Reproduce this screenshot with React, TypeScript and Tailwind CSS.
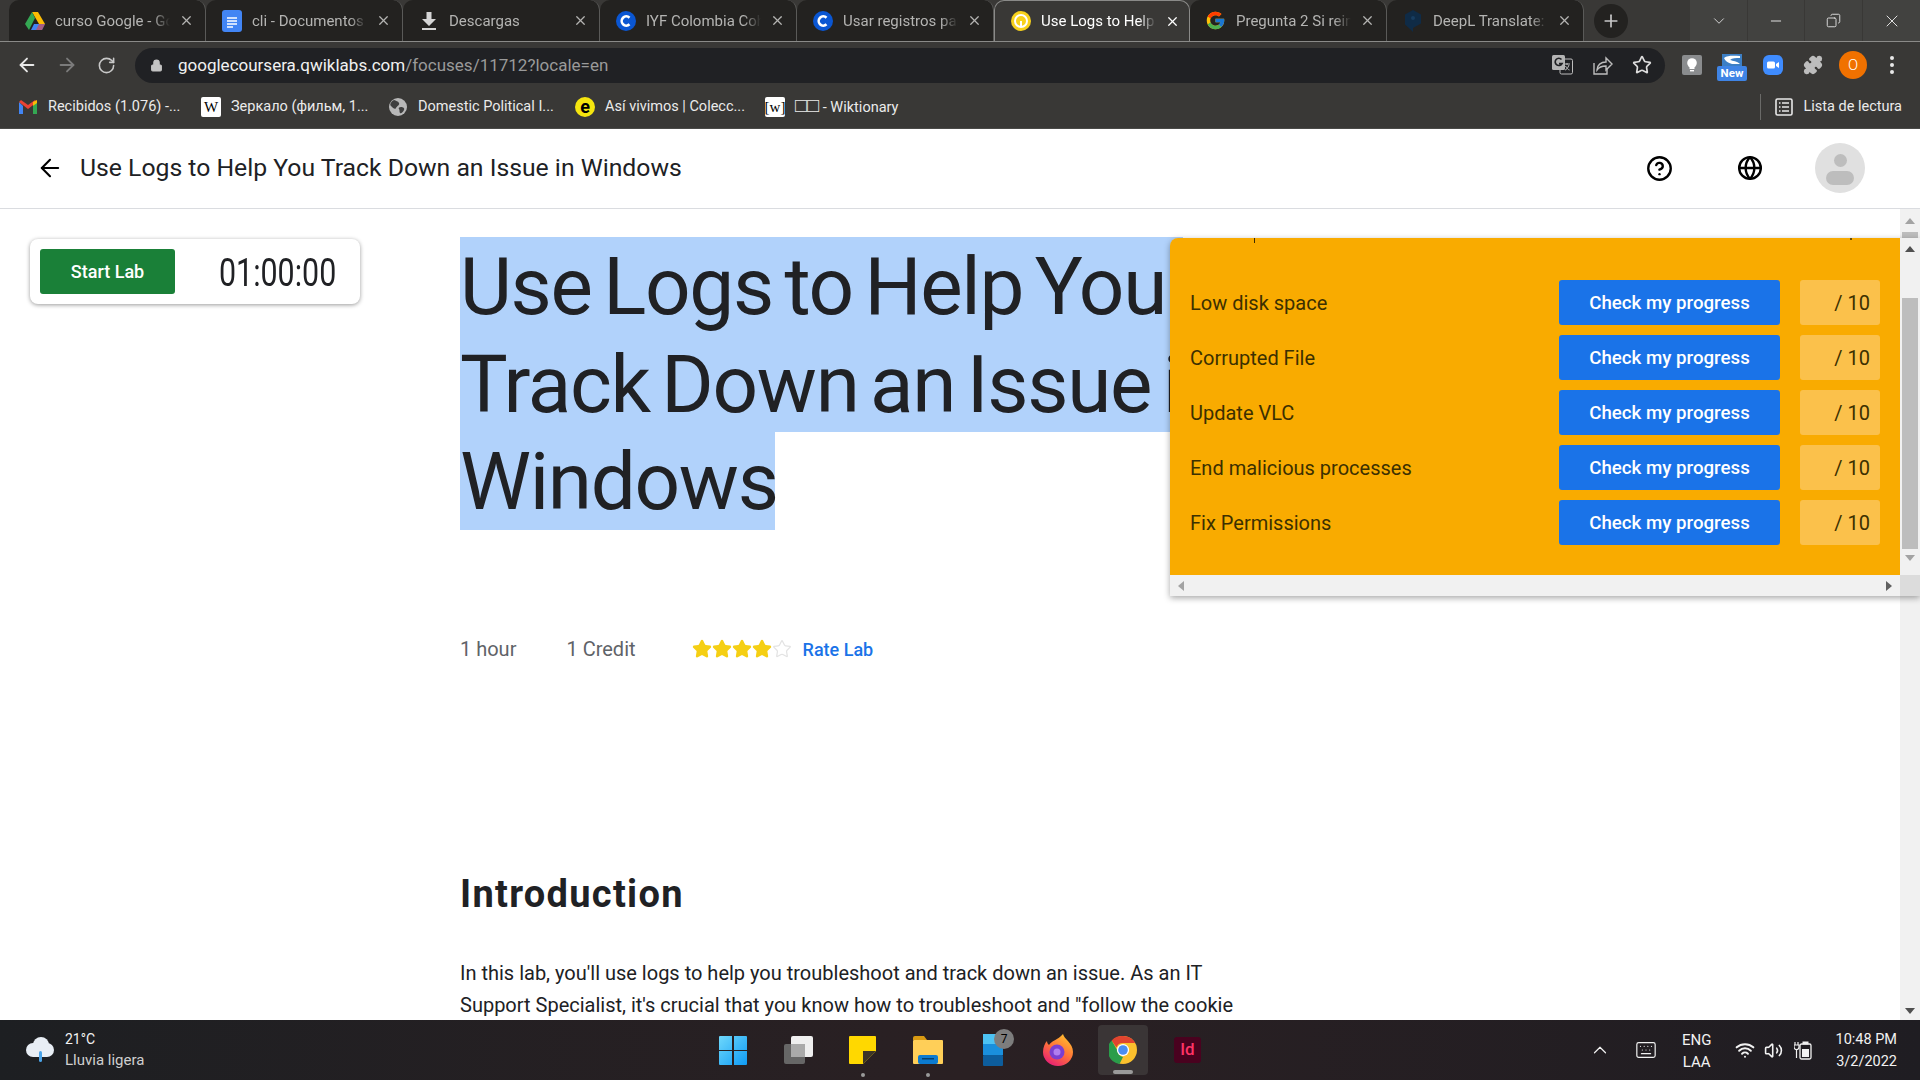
import React from 'react';
import {
  ArrowLeft,
  ArrowRight,
  RotateCw,
  Lock,
  Star,
  CircleHelp,
  Globe,
  ChevronDown,
  ChevronUp,
  Minus,
  X,
  Plus,
  Copy,
  Keyboard,
  Wifi,
  Volume2,
  Puzzle,
} from 'lucide-react';
import { FcGoogle } from 'react-icons/fc';

const DriveIcon = () => (
  <svg width="20" height="18" viewBox="0 0 20 18">
    <polygon points="7,0 13,0 20,12 14,12" fill="#fbbc04" />
    <polygon points="7,0 10,6 4,18 0,12" fill="#34a853" />
    <polygon points="6,18 9,12 20,12 17,18" fill="#4285f4" />
    <polygon points="14,12 20,12 17,18 11,18" fill="#ea4335" opacity="0.6" />
  </svg>
);

const DocsIcon = () => (
  <svg width="20" height="22" viewBox="0 0 20 22">
    <rect width="20" height="22" rx="3" fill="#4285f4" />
    <path d="M5 8h10M5 11h10M5 14h10M5 17h6" stroke="#fff" strokeWidth="1.6" />
  </svg>
);

const DownloadArrow = () => (
  <svg width="16" height="18" viewBox="0 0 16 18">
    <path d="M5.500 0h5v7H15l-7 7-7-7h4.500z" fill="#d5d5d5" />
    <rect x="1" y="16" width="14" height="2" fill="#d5d5d5" />
  </svg>
);

const CourseraIcon = () => (
  <svg width="20" height="20" viewBox="0 0 20 20">
    <circle cx="10" cy="10" r="10" fill="#0a56d2" />
    <path d="M13.500 6.700a4.600 4.600 0 1 0 0 6.600" fill="none" stroke="#fff" strokeWidth="2.600" />
  </svg>
);

const QwikIcon = () => (
  <svg width="20" height="20" viewBox="0 0 20 20">
    <circle cx="10" cy="10" r="10" fill="#f8d21c" />
    <circle cx="10" cy="10" r="6" fill="none" stroke="#fff" strokeWidth="2" />
    <path d="M10 10v6" stroke="#fff" strokeWidth="2" />
  </svg>
);

const DeeplIcon = () => (
  <svg width="18" height="22" viewBox="0 0 18 22">
    <path d="M9 0l8 4.500v9L9 18v4l-3-3-5-4.500V4.500z" fill="#0f2b46" />
    <circle cx="9" cy="8" r="2" fill="#173d60" />
  </svg>
);

const GmailIcon = () => (
  <svg width="18" height="14" viewBox="0 0 18 14">
    <path d="M0 2v12h4V6z" fill="#4285f4" />
    <path d="M18 2v12h-4V6z" fill="#34a853" />
    <path d="M0 2l9 7 9-7-2-2-7 5-7-5-2 2z" fill="#ea4335" />
    <path d="M14 2l4-2v3l-4 3z" fill="#fbbc04" />
  </svg>
);

const GlobeFav = () => (
  <svg width="18" height="18" viewBox="0 0 18 18">
    <circle cx="9" cy="9" r="9" fill="#b8b8b8" />
    <path d="M5 2c2 1 4 1 5 3s-2 3-3 5-3 0-5-2 1-5 3-6zM12 9c2 0 4 1 3 3s-3 4-4 3 0-3-1-4 0-2 2-2z" fill="#3f3f3f" />
  </svg>
);

const BookmarkW = ({ bracket }: { bracket?: boolean }) => (
  <span className="flex h-[20px] w-[20px] shrink-0 items-center justify-center rounded-[2px] bg-white font-['Liberation_Serif',serif] text-[15px] leading-none text-black">
    {bracket ? '[w]' : 'W'}
  </span>
);

const ReadingList = () => (
  <svg width="18" height="18" viewBox="0 0 18 18" fill="none" stroke="#e8e8e8">
    <rect x="1" y="1" width="16" height="16" rx="1.500" strokeWidth="1.600" />
    <path d="M4 5h1.500M7 5h7M4 9h1.500M7 9h7M4 13h1.500M7 13h7" strokeWidth="1.400" />
  </svg>
);

const TranslateIcon = () => (
  <svg width="21" height="20" viewBox="0 0 21 20">
    <rect x="8" y="4" width="12.500" height="15" rx="1.500" fill="#202124" stroke="#bdbdbd" strokeWidth="1" />
    <path d="M12 9h6M15 8v2M17 10c-1 3-3 5-4 5M13.500 11c1 2 3 4 4 4" stroke="#bdbdbd" strokeWidth="1" fill="none" />
    <rect x="0" y="0" width="13" height="15" rx="1.500" fill="#b4b4b4" />
    <path d="M9.500 4.500a3.600 3.600 0 1 0 .5 4H7" fill="none" stroke="#202124" strokeWidth="1.700" />
  </svg>
);

const ShareIcon = () => (
  <svg width="20" height="20" viewBox="0 0 20 20" fill="none" stroke="#bdbdbd" strokeWidth="1.400">
    <path d="M1 8v11h13v-5" />
    <path d="M4 15c0-5 4-8 9-8V3l6 6-6 6v-4c-4 0-7 1-9 4z" />
  </svg>
);

const BulbExt = () => (
  <svg width="20" height="20" viewBox="0 0 20 20">
    <rect width="20" height="20" rx="2" fill="#8a8c8e" />
    <circle cx="10" cy="8" r="4.800" fill="#fff" />
    <rect x="7.500" y="11" width="5" height="3" fill="#fff" />
    <rect x="8" y="15" width="4" height="1.400" fill="#fff" />
  </svg>
);

const NewExt = () => (
  <span className="flex w-[30px] flex-col items-center">
    <svg width="20" height="12" viewBox="0 0 20 12">
      <rect width="20" height="12" fill="#3d7fc4" />
      <path d="M2 4c4-3 10-2 16-2v2c-4 0-8 0-10 2 3 1 7 1 10 4l-8 0C6 9 3 7 2 4z" fill="#fff" />
    </svg>
    <span className="w-[30px] rounded-[2px] bg-[#3f84e5] text-center text-[11.500px] leading-[15px] font-bold text-white">
      New
    </span>
  </span>
);

const ZoomExt = () => (
  <svg width="20" height="20" viewBox="0 0 20 20">
    <rect width="20" height="20" rx="6" fill="#3f8cff" />
    <rect x="4" y="6.500" width="8" height="7" rx="1.500" fill="#fff" />
    <path d="M13 9l3-2v6l-3-2z" fill="#fff" />
  </svg>
);

const BatteryPlug = () => (
  <svg width="18" height="20" viewBox="0 0 18 20" fill="none" stroke="#f2f2f2">
    <path d="M1 2v3M4 2v3M0 5h5v2a2.500 2.500 0 0 1-5 0zM2.500 10v8" strokeWidth="1.200" />
    <rect x="6" y="4" width="11" height="15" rx="1.500" strokeWidth="1.300" />
    <rect x="9" y="2" width="5" height="2" fill="#f2f2f2" />
    <rect x="8" y="9" width="7" height="8" fill="#f2f2f2" stroke="none" />
  </svg>
);

const WinLogo = () => (
  <svg width="28" height="29" viewBox="0 0 28 29">
    <defs>
      <linearGradient id="winblue" x1="0" y1="0" x2="1" y2="1">
        <stop offset="0" stopColor="#6fd8fb" />
        <stop offset="1" stopColor="#0f9bf5" />
      </linearGradient>
    </defs>
    <path d="M0 1a1 1 0 0 1 1-1h12v14H0zM15 0h12a1 1 0 0 1 1 1v13H15zM0 15h13v14H1a1 1 0 0 1-1-1zM15 15h13v13a1 1 0 0 1-1 1H15z" fill="url(#winblue)" />
  </svg>
);

const TaskView = () => (
  <svg width="30" height="28" viewBox="0 0 30 28">
    <rect x="1" y="8" width="21" height="20" rx="2" fill="#666" />
    <rect x="8" y="0" width="22" height="21" rx="2" fill="#efefef" />
    <rect x="8" y="8" width="14" height="13" fill="#aaa" />
  </svg>
);

const StickyIcon = () => (
  <svg width="27" height="28" viewBox="0 0 27 28">
    <path d="M1 0h25a1 1 0 0 1 1 1v14L14 28H1a1 1 0 0 1-1-1V1a1 1 0 0 1 1-1z" fill="#ffd800" />
    <path d="M14 28V15h13z" fill="#3b3527" />
  </svg>
);

const FolderIcon = () => (
  <svg width="30" height="28" viewBox="0 0 30 28">
    <path d="M0 2a2 2 0 0 1 2-2h9l3 4H0z" fill="#d99a12" />
    <rect y="4" width="30" height="24" rx="1" fill="#ffcf58" />
    <rect x="5" y="19" width="20" height="9" rx="2" fill="#0c7bd0" />
    <rect x="9" y="22" width="12" height="1.500" fill="#04406e" />
  </svg>
);

const StoreIcon = () => (
  <svg width="20" height="32" viewBox="0 0 20 32">
    <rect width="20" height="10" fill="#4cc2f3" />
    <rect y="10" width="20" height="11" fill="#1a8fdc" />
    <rect y="21" width="20" height="11" rx="1" fill="#0d5d9c" />
  </svg>
);

const FirefoxIcon = () => (
  <svg width="30" height="32" viewBox="0 0 30 32">
    <defs>
      <linearGradient id="ffgrad" x1="0.8" y1="0" x2="0.2" y2="1">
        <stop offset="0" stopColor="#ffc32c" />
        <stop offset="0.5" stopColor="#ff7139" />
        <stop offset="1" stopColor="#e5197a" />
      </linearGradient>
    </defs>
    <path d="M20 0c1 5 10 9 10 18a15 14 0 0 1-30 0C0 13 2 9 4 7c0 2 1 3 2 4 2-4 9-5 14-11z" fill="url(#ffgrad)" />
    <circle cx="14" cy="18" r="7.500" fill="#7a3fd1" />
    <circle cx="14" cy="18" r="3.500" fill="#b07df0" />
  </svg>
);

const ChromeIcon = () => (
  <svg width="28" height="32" viewBox="0 0 32 32">
    <circle cx="16" cy="16" r="16" fill="#fbc02d" />
    <path d="M16 0a16 16 0 0 1 14 8H16a8 8 0 0 0-7.500 5L3 5a16 16 0 0 1 13-5z" fill="#e0442f" />
    <path d="M3 5l7 12a8 8 0 0 0 6 7l-4 8A16 16 0 0 1 3 5z" fill="#2a9d4a" />
    <circle cx="16" cy="16" r="7" fill="#fff" />
    <circle cx="16" cy="16" r="5.500" fill="#4a8df0" />
  </svg>
);

const tabs = [
  { title: 'curso Google - Google Drive', icon: <DriveIcon /> },
  { title: 'cli - Documentos de Google', icon: <DocsIcon /> },
  { title: 'Descargas', icon: <DownloadArrow /> },
  { title: 'IYF Colombia Coherencia', icon: <CourseraIcon /> },
  { title: 'Usar registros para rastrear', icon: <CourseraIcon /> },
  { title: 'Use Logs to Help You Track', icon: <QwikIcon />, active: true },
  { title: 'Pregunta 2 Si reinicias', icon: <FcGoogle size={21} /> },
  { title: 'DeepL Translate: The', icon: <DeeplIcon /> },
];

const bookmarks = [
  { id: 'gmail', label: 'Recibidos (1.076) -...', icon: <GmailIcon />, width: 'w-[183px]' },
  { id: 'wiki', label: 'Зеркало (фильм, 1...', icon: <BookmarkW />, width: 'w-[187px]' },
  { id: 'globe', label: 'Domestic Political I...', icon: <GlobeFav />, width: 'w-[187px]' },
  {
    id: 'elem',
    label: 'Así vivimos | Colecc...',
    icon: (
      <span className="flex h-[20px] w-[20px] shrink-0 items-center justify-center rounded-full bg-[#f5e50f] text-[18px] leading-none font-bold text-black">
        e
      </span>
    ),
    width: 'w-[190px]',
  },
  {
    id: 'wikt',
    label: (
      <>
        <span className="text-[20px] leading-none">□□</span> - Wiktionary
      </>
    ),
    icon: <BookmarkW bracket />,
    width: 'w-[135px]',
  },
];

const checks = ['Low disk space', 'Corrupted File', 'Update VLC', 'End malicious processes', 'Fix Permissions'];

const TabStrip = () => (
  <div className="flex h-[42px] items-end border-b border-[#8a8a88] bg-[#393836] pl-[9px]">
    {tabs.map((tab) => (
      <div
        key={tab.title}
        className={
          tab.active
            ? 'flex h-[41px] w-[196px] shrink-0 items-center rounded-t-[10px] border border-b-0 border-[#8a8a88] bg-[#393836] pl-[15px] text-white'
            : 'flex h-[41px] w-[197px] shrink-0 items-center rounded-t-[10px] border-r border-[#5a5a58] bg-[#232220] pl-[15px] text-[#b4b4b2]'
        }
      >
        <span className="flex w-[21px] shrink-0 justify-center">{tab.icon}</span>
        <span className="mt-[1px] ml-[10px] w-[115px] overflow-hidden text-[15px] whitespace-nowrap [mask-image:linear-gradient(to_right,black_85%,transparent)]">
          {tab.title}
        </span>
        <X size={15} strokeWidth={2} className="ml-[9px] shrink-0" />
      </div>
    ))}
    <div className="mb-[3px] ml-[10px] flex h-[34px] w-[34px] items-center justify-center rounded-full bg-[#232220] text-[#c8c8c8]">
      <Plus size={20} />
    </div>
    <div className="ml-auto flex h-[41px] self-start bg-[#424240] text-[#e0e0e0]">
      <div className="flex w-[58px] items-center justify-center border-r border-[#393836]">
        <ChevronDown size={18} strokeWidth={1.2} />
      </div>
      <div className="flex w-[57px] items-center justify-center border-r border-[#393836]">
        <Minus size={16} strokeWidth={1.5} />
      </div>
      <div className="flex w-[58px] items-center justify-center border-r border-[#393836]">
        <Copy size={15} strokeWidth={1.5} className="-scale-x-100" />
      </div>
      <div className="flex w-[57px] items-center justify-center">
        <X size={20} strokeWidth={1.2} />
      </div>
    </div>
  </div>
);

const Toolbar = () => (
  <div className="flex h-[46px] items-center bg-[#393836]">
    <ArrowLeft size={22} className="ml-[16px] text-[#e8e8e8]" />
    <ArrowRight size={22} className="ml-[18px] text-[#7b7b7b]" />
    <RotateCw size={19} className="ml-[19px] text-[#c8c8c8]" />
    <div className="ml-[19px] flex h-[35px] w-[1530px] items-center rounded-full bg-[#202124] pr-[13px] pl-[15px]">
      <Lock size={13} className="text-[#c4c4c4]" fill="#c4c4c4" />
      <span className="mt-[1px] ml-[15px] text-[17px] text-[#f1f1f1]">
        googlecoursera.qwiklabs.com<span className="text-[#9a9a9a]">/focuses/11712?locale=en</span>
      </span>
      <span className="ml-auto flex">
        <TranslateIcon />
      </span>
      <span className="ml-[20px] flex">
        <ShareIcon />
      </span>
      <Star size={20} className="ml-[19px] text-[#dedede]" />
    </div>
    <span className="ml-[17px] flex">
      <BulbExt />
    </span>
    <span className="mt-[5px] ml-[15px] flex">
      <NewExt />
    </span>
    <span className="ml-[16px] flex">
      <ZoomExt />
    </span>
    <Puzzle size={20} className="ml-[20px] text-[#bdbdbd]" fill="#bdbdbd" />
    <span className="ml-[16px] flex h-[28px] w-[28px] items-center justify-center rounded-full bg-[#f07100] text-[15px] font-light text-white">
      O
    </span>
    <span className="ml-[23px] flex flex-col gap-[3px]">
      <span className="h-[4px] w-[4px] rounded-full bg-[#e8e8e8]" />
      <span className="h-[4px] w-[4px] rounded-full bg-[#e8e8e8]" />
      <span className="h-[4px] w-[4px] rounded-full bg-[#e8e8e8]" />
    </span>
  </div>
);

const BookmarksBar = () => (
  <div className="flex h-[41px] items-center border-b border-[#4a4a48] bg-[#393836] pb-[2px] pl-[19px] text-[14.500px] text-[#ebebeb]">
    {bookmarks.map((b) => (
      <div key={b.id} className={`flex items-center ${b.width}`}>
        <span className="flex w-[18px] shrink-0 justify-center">{b.icon}</span>
        <span className="ml-[11px] whitespace-nowrap">{b.label}</span>
      </div>
    ))}
    <div className="ml-auto flex items-center pr-[18px]">
      <span className="h-[26px] w-px bg-[#6a6a68]" />
      <span className="ml-[14px] flex">
        <ReadingList />
      </span>
      <span className="ml-[10px]">Lista de lectura</span>
    </div>
  </div>
);

const PopupPanel = () => (
  <div className="absolute top-[29px] left-[1170px] z-10 w-[750px] overflow-hidden rounded-tl-[8px] shadow-[0_2px_6px_rgba(0,0,0,0.35)]">
    <div className="flex">
      <div className="relative h-[337px] w-[730px] bg-[#f9ab00] pt-[42px] pr-[20px] pl-[20px]">
        <span className="absolute top-0 left-[84px] h-[5px] w-[1px] bg-[#3c2c00]" />
        <span className="absolute top-0 left-[680px] h-[2px] w-[2px] bg-[#6b4c00]" />
        {checks.map((name) => (
          <div key={name} className="mb-[10px] flex h-[45px] items-center">
            <span className="flex-1 text-[20px] text-[#3c3000]">{name}</span>
            <button className="h-[45px] w-[221px] rounded-[3px] bg-[#1a73e8] pt-[1px] text-[18.700px] font-medium text-white">
              Check my progress
            </button>
            <span className="ml-[20px] flex h-[45px] w-[80px] items-center justify-end rounded-[3px] bg-[#fbc14b] pr-[10px] text-[20px] text-[#3c3000]">
              / 10
            </span>
          </div>
        ))}
      </div>
      <div className="flex w-[20px] flex-col items-center bg-[#f1f1f1]">
        <span className="mt-[8px] h-0 w-0 border-x-[5px] border-b-[6px] border-x-transparent border-b-[#505050]" />
        <span className="mt-[46px] h-[251px] w-[16px] bg-[#bdbdbd]" />
        <span className="mt-[6px] h-0 w-0 border-x-[5px] border-t-[6px] border-x-transparent border-t-[#a3a3a3]" />
      </div>
    </div>
    <div className="flex h-[21px]">
      <div className="flex w-[730px] items-center justify-between bg-[#f1f1f1] px-[8px]">
        <span className="h-0 w-0 border-y-[5px] border-r-[6px] border-y-transparent border-r-[#a3a3a3]" />
        <span className="h-0 w-0 border-y-[5px] border-l-[6px] border-y-transparent border-l-[#606060]" />
      </div>
      <div className="w-[20px] bg-[#dcdcdc]" />
    </div>
  </div>
);

const PageScrollbar = () => (
  <div className="flex w-[20px] shrink-0 flex-col items-center bg-[#f1f1f1]">
    <span className="mt-[9px] h-0 w-0 border-x-[5px] border-b-[6px] border-x-transparent border-b-[#a3a3a3]" />
    <span className="mt-[8px] h-[10px] w-[16px] bg-[#bdbdbd]" />
    <span className="mt-auto mb-[6px] h-0 w-0 border-x-[5px] border-t-[6px] border-x-transparent border-t-[#505050]" />
  </div>
);

const Taskbar = () => (
  <div className="flex h-[60px] shrink-0 items-center bg-gradient-to-r from-[#1d1f22] via-[#2a2023] to-[#1f1d22] text-[#f2f2f2]">
    <div className="flex w-[700px] shrink-0 items-center pl-[26px]">
      <span className="relative h-[26px] w-[28px]">
        <span className="absolute top-[6px] left-0 h-[14px] w-[28px] rounded-full bg-[#e8eef5]" />
        <span className="absolute top-0 left-[7px] h-[16px] w-[16px] rounded-full bg-[#e8eef5]" />
        <span className="absolute top-[14px] left-[13px] h-[11px] w-[3px] rounded-full bg-[#4aa3e8]" />
      </span>
      <div className="ml-[11px] text-[15px] leading-[21px]">
        <div className="text-[14px]">21°C</div>
        <div className="text-[#cfcfcf]">Lluvia ligera</div>
      </div>
    </div>
    <div className="flex items-center">
      {[<WinLogo key="w" />, <TaskView key="t" />, <StickyIcon key="s" />, <FolderIcon key="f" />].map((icon, i) => (
        <div key={i} className="relative flex h-[60px] w-[65px] items-center justify-center">
          {icon}
          {i > 1 && <span className="absolute bottom-[3px] h-[4px] w-[4px] rounded-full bg-[#9a9a9a]" />}
        </div>
      ))}
      <div className="relative flex h-[60px] w-[65px] items-center justify-center">
        <StoreIcon />
        <span className="absolute top-[9px] left-[34px] flex h-[20px] w-[20px] items-center justify-center rounded-full bg-[#7d7d7d] text-[12px] text-black">
          7
        </span>
      </div>
      <div className="flex h-[60px] w-[65px] items-center justify-center">
        <FirefoxIcon />
      </div>
      <div className="flex h-[60px] w-[65px] items-center justify-center">
        <div className="relative flex h-[50px] w-[50px] items-center justify-center rounded-[4px] bg-[#3a3536]">
          <ChromeIcon />
          <span className="absolute bottom-[1px] h-[4px] w-[20px] rounded-full bg-[#9a9a9a]" />
        </div>
      </div>
      <div className="flex h-[60px] w-[65px] items-center justify-center">
        <span className="flex h-[26px] w-[27px] items-center justify-center rounded-[3px] bg-[#49021f] text-[17px] font-medium text-[#ff3366]">
          Id
        </span>
      </div>
    </div>
    <div className="ml-auto flex items-center pr-[23px] text-[14.500px]">
      <ChevronUp size={22} strokeWidth={1.3} />
      <Keyboard size={22} strokeWidth={1.3} className="ml-[24px]" />
      <div className="ml-[25px] pt-[1px] text-center text-[15px] leading-[22px]">
        <div>ENG</div>
        <div>LAA</div>
      </div>
      <Wifi size={20} strokeWidth={2.4} className="ml-[24px]" />
      <Volume2 size={19} className="ml-[9px]" />
      <span className="ml-[11px] flex">
        <BatteryPlug />
      </span>
      <div className="ml-[23px] pt-[1px] text-right leading-[22px]">
        <div>10:48 PM</div>
        <div>3/2/2022</div>
      </div>
    </div>
  </div>
);

export default function App() {
  return (
    <div className="flex h-screen w-[1920px] flex-col overflow-hidden bg-white font-['Roboto',sans-serif]">
      <TabStrip />
      <Toolbar />
      <BookmarksBar />

      <div className="flex h-[80px] shrink-0 items-center border-b border-[#dadce0] pr-[55px] pl-[36px] text-[#202124]">
        <ArrowLeft size={28} strokeWidth={1.8} className="mb-[1px] text-black" />
        <span className="mb-[1px] ml-[16px] text-[24.750px]">Use Logs to Help You Track Down an Issue in Windows</span>
        <CircleHelp size={27} strokeWidth={2.1} className="mb-[1px] ml-auto text-black" />
        <Globe size={26} strokeWidth={2.2} className="mb-[1px] ml-[64px] text-black" />
        <span className="mb-[1px] ml-[52px] flex h-[50px] w-[50px] items-center justify-center overflow-hidden rounded-full bg-[#e0e0e0]">
          <span className="flex flex-col items-center pt-[3px]">
            <span className="h-[13px] w-[13px] rounded-full bg-[#bdbdbd]" />
            <span className="mt-[4px] h-[14px] w-[28px] rounded-full bg-[#bdbdbd]" />
          </span>
        </span>
      </div>

      <div className="relative flex min-h-0 flex-1 overflow-hidden">
        <aside className="w-[460px] shrink-0 pt-[30px] pl-[30px]">
          <div className="flex h-[65px] w-[330px] items-center rounded-[8px] bg-white pl-[10px] shadow-[0_1px_4px_rgba(0,0,0,0.4)]">
            <button className="h-[45px] w-[135px] shrink-0 rounded-[3px] bg-[#1a8038] text-[18px] font-medium text-white">
              Start Lab
            </button>
            <span className="mt-[2px] ml-[44px] origin-left scale-x-[0.8] text-[38px] leading-none whitespace-nowrap text-[#202124]">
              01:00:00
            </span>
          </div>
        </aside>

        <main className="min-w-0 flex-1 pt-[28px]">
          <h1 className="text-[80px] font-normal tracking-[-1.3px] [word-spacing:-7px] whitespace-nowrap text-[#202124]">
            <div className="h-[97.500px] w-[723px] bg-[#b1d2fb] leading-[100px]">Use Logs to Help You</div>
            <div className="h-[97.500px] w-[723px] bg-[#b1d2fb] leading-[100px]">Track Down an Issue in</div>
            <div className="h-[97.500px] w-[315px] bg-[#b1d2fb] leading-[100px]">Windows</div>
          </h1>

          <div className="mt-[103.500px] flex h-[32px] items-center text-[20px] text-[#5f6368]">
            <span>1 hour</span>
            <span className="ml-[50px]">1 Credit</span>
            <div className="ml-[56px] flex">
              {[0, 1, 2, 3].map((i) => (
                <Star key={i} size={20} className="text-[#f5cf14]" fill="#f5cf14" />
              ))}
              <Star size={20} className="text-[#e3e3e3]" strokeWidth={1.5} />
            </div>
            <span className="ml-[11px] text-[18px] font-medium text-[#1a73e8]">Rate Lab</span>
          </div>

          <h2 className="mt-[205px] text-[38px] leading-[48px] font-bold tracking-[1.3px] text-[#202124]">Introduction</h2>

          <p className="mt-[39px] w-[780px] text-[20px] leading-[32px] text-[#202124]">
            In this lab, you'll use logs to help you troubleshoot and track down an issue. As an IT Support Specialist,
            it's crucial that you know how to troubleshoot and "follow the cookie crumbs"
          </p>
        </main>

        <PageScrollbar />
        <PopupPanel />
      </div>

      <Taskbar />
    </div>
  );
}
